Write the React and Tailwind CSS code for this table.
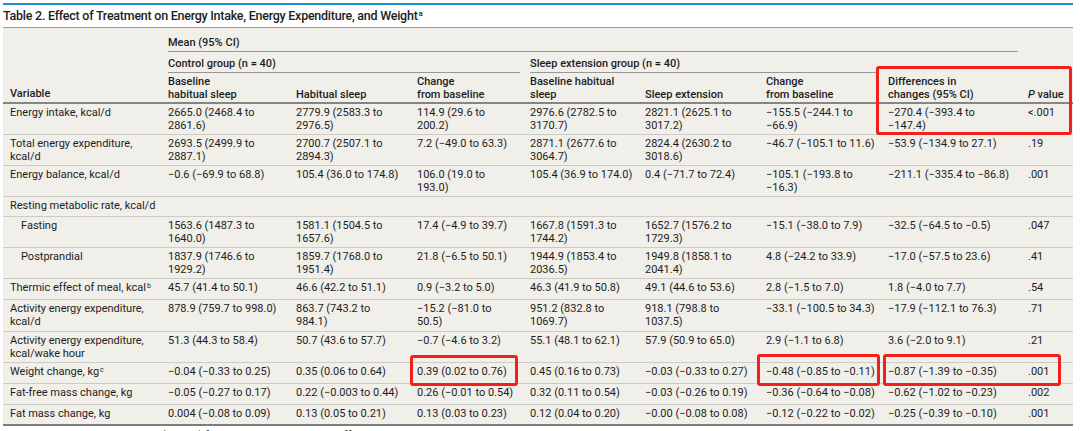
import React from "react";

// column template shared by header and body rows
const COLS =
  "grid grid-cols-[165px_128px_121px_113px_115px_121px_122px_140px_45px]";

const rows = [
  {
    label: "Energy intake, kcal/d",
    h: "h-[31px]",
    cells: [
      "2665.0 (2468.4 to\n2861.6)",
      "2779.9 (2583.3 to\n2976.5)",
      "114.9 (29.6 to\n200.2)",
      "2976.6 (2782.5 to\n3170.7)",
      "2821.1 (2625.1 to\n3017.2)",
      "−155.5 (−244.1 to\n−66.9)",
      "−270.4 (−393.4 to\n−147.4)",
    ],
    p: "<.001",
  },
  {
    label: "Total energy expenditure,\nkcal/d",
    h: "h-[31px]",
    cells: [
      "2693.5 (2499.9 to\n2887.1)",
      "2700.7 (2507.1 to\n2894.3)",
      "7.2 (−49.0 to 63.3)",
      "2871.1 (2677.6 to\n3064.7)",
      "2824.4 (2630.2 to\n3018.6)",
      "−46.7 (−105.1 to 11.6)",
      "−53.9 (−134.9 to 27.1)",
    ],
    p: ".19",
  },
  {
    label: "Energy balance, kcal/d",
    h: "h-[31px]",
    cells: [
      "−0.6 (−69.9 to 68.8)",
      "105.4 (36.0 to 174.8)",
      "106.0 (19.0 to\n193.0)",
      "105.4 (36.9 to 174.0)",
      "0.4 (−71.7 to 72.4)",
      "−105.1 (−193.8 to\n−16.3)",
      "−211.1 (−335.4 to −86.8)",
    ],
    p: ".001",
  },
  { label: "Resting metabolic rate, kcal/d", h: "h-[20px]", cells: null },
  {
    label: "Fasting",
    indent: true,
    h: "h-[31px]",
    cells: [
      "1563.6 (1487.3 to\n1640.0)",
      "1581.1 (1504.5 to\n1657.6)",
      "17.4 (−4.9 to 39.7)",
      "1667.8 (1591.3 to\n1744.2)",
      "1652.7 (1576.2 to\n1729.3)",
      "−15.1 (−38.0 to 7.9)",
      "−32.5 (−64.5 to −0.5)",
    ],
    p: ".047",
  },
  {
    label: "Postprandial",
    indent: true,
    h: "h-[31px]",
    cells: [
      "1837.9 (1746.6 to\n1929.2)",
      "1859.7 (1768.0 to\n1951.4)",
      "21.8 (−6.5 to 50.1)",
      "1944.9 (1853.4 to\n2036.5)",
      "1949.8 (1858.1 to\n2041.4)",
      "4.8 (−24.2 to 33.9)",
      "−17.0 (−57.5 to 23.6)",
    ],
    p: ".41",
  },
  {
    label: "Thermic effect of meal, kcal",
    sup: "b",
    h: "h-[21px]",
    cells: [
      "45.7 (41.4 to 50.1)",
      "46.6 (42.2 to 51.1)",
      "0.9 (−3.2 to 5.0)",
      "46.3 (41.9 to 50.8)",
      "49.1 (44.6 to 53.6)",
      "2.8 (−1.5 to 7.0)",
      "1.8 (−4.0 to 7.7)",
    ],
    p: ".54",
  },
  {
    label: "Activity energy expenditure,\nkcal/d",
    h: "h-[32px]",
    cells: [
      "878.9 (759.7 to 998.0)",
      "863.7 (743.2 to\n984.1)",
      "−15.2 (−81.0 to\n50.5)",
      "951.2 (832.8 to\n1069.7)",
      "918.1 (798.8 to\n1037.5)",
      "−33.1 (−100.5 to 34.3)",
      "−17.9 (−112.1 to 76.3)",
    ],
    p: ".71",
  },
  {
    label: "Activity energy expenditure,\nkcal/wake hour",
    h: "h-[31px]",
    cells: [
      "51.3 (44.3 to 58.4)",
      "50.7 (43.6 to 57.7)",
      "−0.7 (−4.6 to 3.2)",
      "55.1 (48.1 to 62.1)",
      "57.9 (50.9 to 65.0)",
      "2.9 (−1.1 to 6.8)",
      "3.6 (−2.0 to 9.1)",
    ],
    p: ".21",
  },
  {
    label: "Weight change, kg",
    sup: "c",
    h: "h-[21px]",
    cells: [
      "−0.04 (−0.33 to 0.25)",
      "0.35 (0.06 to 0.64)",
      "0.39 (0.02 to 0.76)",
      "0.45 (0.16 to 0.73)",
      "−0.03 (−0.33 to 0.27)",
      "−0.48 (−0.85 to −0.11)",
      "−0.87 (−1.39 to −0.35)",
    ],
    p: ".001",
  },
  {
    label: "Fat-free mass change, kg",
    h: "h-[21px]",
    cells: [
      "−0.05 (−0.27 to 0.17)",
      "0.22 (−0.003 to 0.44)",
      "0.26 (−0.01 to 0.54)",
      "0.32 (0.11 to 0.54)",
      "−0.03 (−0.26 to 0.19)",
      "−0.36 (−0.64 to −0.08)",
      "−0.62 (−1.02 to −0.23)",
    ],
    p: ".002",
  },
  {
    label: "Fat mass change, kg",
    h: "h-[21px]",
    cells: [
      "0.004 (−0.08 to 0.09)",
      "0.13 (0.05 to 0.21)",
      "0.13 (0.03 to 0.23)",
      "0.12 (0.04 to 0.20)",
      "−0.00 (−0.08 to 0.08)",
      "−0.12 (−0.22 to −0.02)",
      "−0.25 (−0.39 to −0.10)",
    ],
    p: ".001",
  },
];

const colHeads = [
  "Baseline\nhabitual sleep",
  "Habitual sleep",
  "Change\nfrom baseline",
  "Baseline habitual\nsleep",
  "Sleep extension",
  "Change\nfrom baseline",
  "Differences in\nchanges (95% CI)",
];

function Highlight({ className }) {
  return (
    <div
      className={`absolute border-[3px] border-[#f0201a] rounded-[3px] ${className}`}
    />
  );
}

export default function App() {
  return (
    <div
      className="relative w-[1080px] h-[431px] overflow-hidden bg-white text-[#1d1d1d] pl-[3px] pt-[3px]"
      style={{ fontFamily: "Roboto, 'Liberation Sans', sans-serif" }}
    >
      <div className="w-[1070px] h-[2px] bg-[#1b8fd2]" />
      <div className="w-[1070px] pt-[3px] pb-[3px] text-[12.5px] leading-[16px] font-medium tracking-[-0.25px] border-b border-[#9b9b9b]">
        Table 2. Effect of Treatment on Energy Intake, Energy Expenditure, and
        Weight<sup className="text-[8px] ml-[1px]">a</sup>
      </div>

      <div className="w-[1070px] bg-[#f1efe9] text-[11px] leading-[13px]">
        {/* header */}
        <div className={`${COLS} font-medium border-b-2 border-[#858585]`}>
          <div className="col-start-1 row-start-1 row-span-3 flex items-end pl-[7px] pb-[2px]">
            Variable
          </div>
          <div className="col-start-2 col-span-7 row-start-1 mr-[10px] pt-[8px] pb-[2px] border-b border-[#979797]">
            Mean (95% CI)
          </div>
          <div className="col-start-2 col-span-3 row-start-2 mr-[10px] pt-[5px] pb-[2px] border-b border-[#979797]">
            Control group (n = 40)
          </div>
          <div className="col-start-5 col-span-3 row-start-2 mr-[10px] pt-[5px] pb-[2px] border-b border-[#979797]">
            Sleep extension group (n = 40)
          </div>
          {colHeads.map((h, i) => (
            <div
              key={i}
              className="row-start-3 flex items-end whitespace-pre-line pt-[2px] pb-[1px]"
            >
              {h}
            </div>
          ))}
          <div className="row-start-3 flex items-end pb-[1px]">
            <span>
              <i>P</i> value
            </span>
          </div>
        </div>

        {/* body */}
        {rows.map((r, i) => (
          <div
            key={i}
            className={`${COLS} ${r.h} pt-[3px] leading-[12.5px] whitespace-pre-line ${
              i === rows.length - 1
                ? "border-b-2 border-[#7d7d7d]"
                : "border-b border-[#cdcbc5]"
            }`}
          >
            <div
              className={`${r.indent ? "pl-[18px]" : "pl-[7px]"} ${
                r.cells ? "" : "col-span-9"
              }`}
            >
              {r.label}
              {r.sup && <sup className="text-[7px] ml-[1px]">{r.sup}</sup>}
            </div>
            {r.cells &&
              r.cells.map((c, j) => <div key={j}>{c}</div>)}
            {r.cells && <div>{r.p}</div>}
          </div>
        ))}
      </div>

      <div className="w-[1070px] pt-[3px] text-[11px] leading-[13px] text-[#333]">
        Values are least-squares means (95% CI) from linear mixed models; differences in changes were calculated as sleep extension minus control.
      </div>

      <Highlight className="left-[876px] top-[66px] w-[196px] h-[69px]" />
      <Highlight className="left-[410px] top-[355px] w-[108px] h-[31px]" />
      <Highlight className="left-[757px] top-[354px] w-[123px] h-[32px]" />
      <Highlight className="left-[883px] top-[354px] w-[178px] h-[32px]" />
    </div>
  );
}
